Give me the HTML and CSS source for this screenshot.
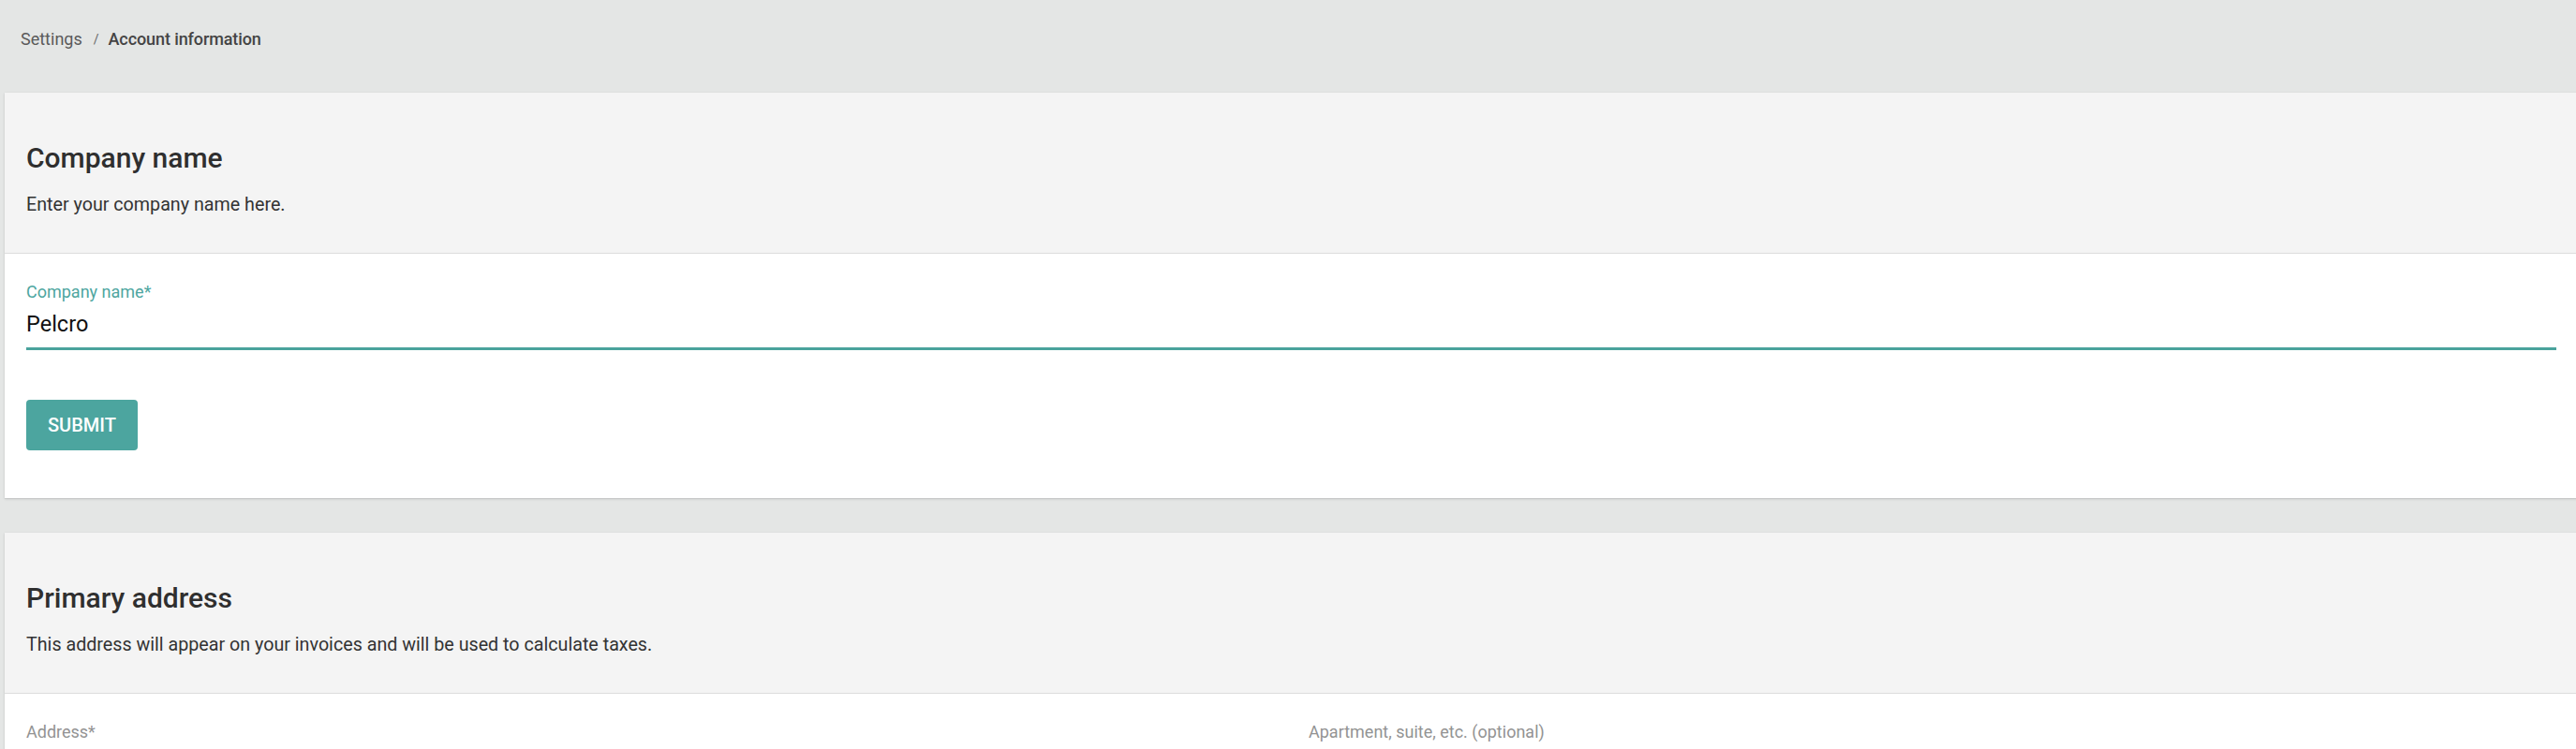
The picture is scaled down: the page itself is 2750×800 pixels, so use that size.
FILE: index.html
```html
<!DOCTYPE html>
<html lang="en">
<head>
<meta charset="utf-8">
<title>Account information</title>
<link rel="stylesheet" href="styles.css">
</head>
<body>
<div class="page">
  <nav class="breadcrumb">
    <span class="crumb">Settings</span>
    <span class="sep">/</span>
    <span class="crumb current">Account information</span>
  </nav>

  <section class="card">
    <header class="card-head">
      <h2 class="card-title">Company name</h2>
      <p class="card-desc">Enter your company name here.</p>
    </header>
    <div class="card-body">
      <label class="field focused">
        <span class="field-label">Company name*</span>
        <span class="field-input">Pelcro</span>
      </label>
      <div class="actions">
        <button class="btn" type="button">Submit</button>
      </div>
    </div>
  </section>

  <section class="card card-gap">
    <header class="card-head">
      <h2 class="card-title">Primary address</h2>
      <p class="card-desc">This address will appear on your invoices and will be used to calculate taxes.</p>
    </header>
    <div class="card-body">
      <div class="grid-2">
        <label class="field">
          <span class="field-label">Address*</span>
          <span class="field-input"></span>
        </label>
        <label class="field">
          <span class="field-label">Apartment, suite, etc. (optional)</span>
          <span class="field-input"></span>
        </label>
      </div>
    </div>
  </section>
</div>
</body>
</html>
```

FILE: styles.css
```css
html, body {
  margin: 0;
  padding: 0;
}
body {
  background: #e4e6e5;
  font-family: Roboto, "Liberation Sans", Arial, sans-serif;
  color: #333;
  overflow-x: hidden;
}
.page {
  display: flex;
  flex-direction: column;
}
.breadcrumb {
  box-sizing: border-box;
  height: 99px;
  padding: 30px 22px 0;
  display: flex;
  align-items: flex-start;
  font-size: 18px;
  line-height: 24px;
}
.crumb {
  color: #5a5a5a;
}
.crumb.current {
  color: #444;
  font-weight: 500;
  letter-spacing: -0.1px;
}
.sep {
  color: #666;
  font-size: 14px;
  margin: 0 10px 0 12px;
}
.card {
  margin-left: 5px;
  margin-right: -2px;
  background: #fff;
  box-shadow: 0 1px 3px rgba(0, 0, 0, 0.12), 0 1px 1px rgba(0, 0, 0, 0.06);
}
.card-gap {
  margin-top: 37px;
}
.card-head {
  background: #f4f4f4;
  padding: 50px 23px 37px;
  border-bottom: 1px solid #dcdcdc;
}
.card-title {
  margin: 0;
  font-size: 30px;
  line-height: 40px;
  font-weight: 500;
  color: #2f2f2f;
}
.card-desc {
  margin: 16px 0 0;
  font-size: 19.7px;
  line-height: 28px;
  color: #333;
}
.card-body {
  padding: 29px 23px 51px;
}
.field {
  display: flex;
  flex-direction: column;
}
.field-label {
  font-size: 18px;
  line-height: 24px;
  color: #939393;
}
.field.focused .field-label {
  color: #4ea69f;
}
.field-input {
  margin-top: 6px;
  height: 32px;
  font-size: 23.5px;
  line-height: 32px;
  color: #111;
  padding-bottom: 9px;
}
.field.focused .field-input {
  border-bottom: 3px solid #4aa39c;
}
.actions {
  margin-top: 53px;
  display: flex;
}
.btn {
  height: 54px;
  padding: 0 23px;
  border: none;
  border-radius: 4px;
  background: #4ca59f;
  color: #fff;
  font-family: Roboto, "Liberation Sans", Arial, sans-serif;
  font-size: 20px;
  font-weight: 500;
  text-transform: uppercase;
  letter-spacing: 0;
}
.grid-2 {
  display: grid;
  grid-template-columns: 1fr 1fr;
  column-gap: 37px;
}
```
